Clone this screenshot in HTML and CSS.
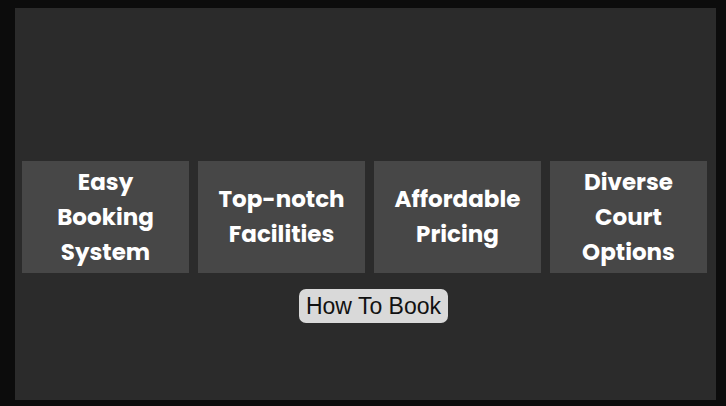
FILE: index.html
```html
<!DOCTYPE html>
<html lang="en">
<head>
  <meta charset="UTF-8" />
  <meta name="viewport" content="width=device-width, initial-scale=1.0"/>
  <title>Court Booking</title>
  <link rel="stylesheet" href="styles.css">
</head>
<body>
  <div class="panel">
    <!-- Features -->
    <div class="features">
      <div class="feature">Easy Booking System</div>
      <div class="feature">Top-notch Facilities</div>
      <div class="feature">Affordable Pricing</div>
      <div class="feature">Diverse Court Options</div>
    </div>

    <div class="actions">
      <button class="how-button">How To Book</button>
    </div>
  </div>
</body>
</html>
```

FILE: styles.css
```css
body {
  background: #0c0c0c;
  margin: 0;
  padding: 8px 10px 6px 15px;
  font-family: 'Poppins', 'Noto Sans', sans-serif;
}

.panel {
  background: #2b2b2b;
  height: 392px;
  width: 701px;
  box-sizing: border-box;
  padding-top: 153px;
}

.features {
  display: grid;
  grid-template-columns: 167px 167px 167px 157px;
  gap: 9px;
  padding-left: 7px;
}

.feature {
  background: #474747;
  height: 112px;
  display: flex;
  align-items: center;
  justify-content: center;
  text-align: center;
  padding: 0 10px;
  box-sizing: border-box;
  color: #fff;
  font-weight: bold;
  font-size: 23px;
  line-height: 35px;
}

.actions {
  display: flex;
  justify-content: center;
  margin-top: 16px;
  padding-left: 16px;
}

.how-button {
  background: #d9d9d9;
  color: #111;
  border: none;
  border-radius: 7px;
  height: 34px;
  width: 149px;
  font-family: 'Liberation Sans', Arial, sans-serif;
  font-size: 23px;
  padding: 0;
}
```
